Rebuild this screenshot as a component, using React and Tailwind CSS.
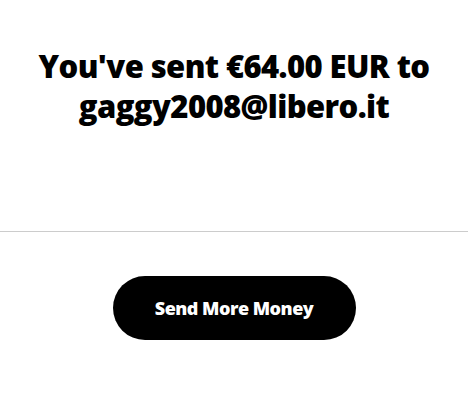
export default function App() {
  return (
    <div className="w-[468px] h-[412px] bg-white flex flex-col" style={{ fontFamily: "'Open Sans', 'Noto Sans', sans-serif" }}>
      {/* HEADER MESSAGE */}
      <div className="h-[231px] flex justify-center pt-[46px]">
        <h1 className="text-center text-[31px] leading-[40px] font-extrabold text-black tracking-[-0.6px] whitespace-nowrap">
          You've sent €64.00 EUR to
          <br />
          gaggy2008@libero.it
        </h1>
      </div>

      <div className="h-px bg-[#cccccc]" />

      {/* ACTION */}
      <div className="flex justify-center pt-[44px]">
        <button className="w-[243px] h-[64px] rounded-full bg-black text-white text-[18px] font-extrabold tracking-[-0.5px]">
          Send More Money
        </button>
      </div>
    </div>
  );
}
